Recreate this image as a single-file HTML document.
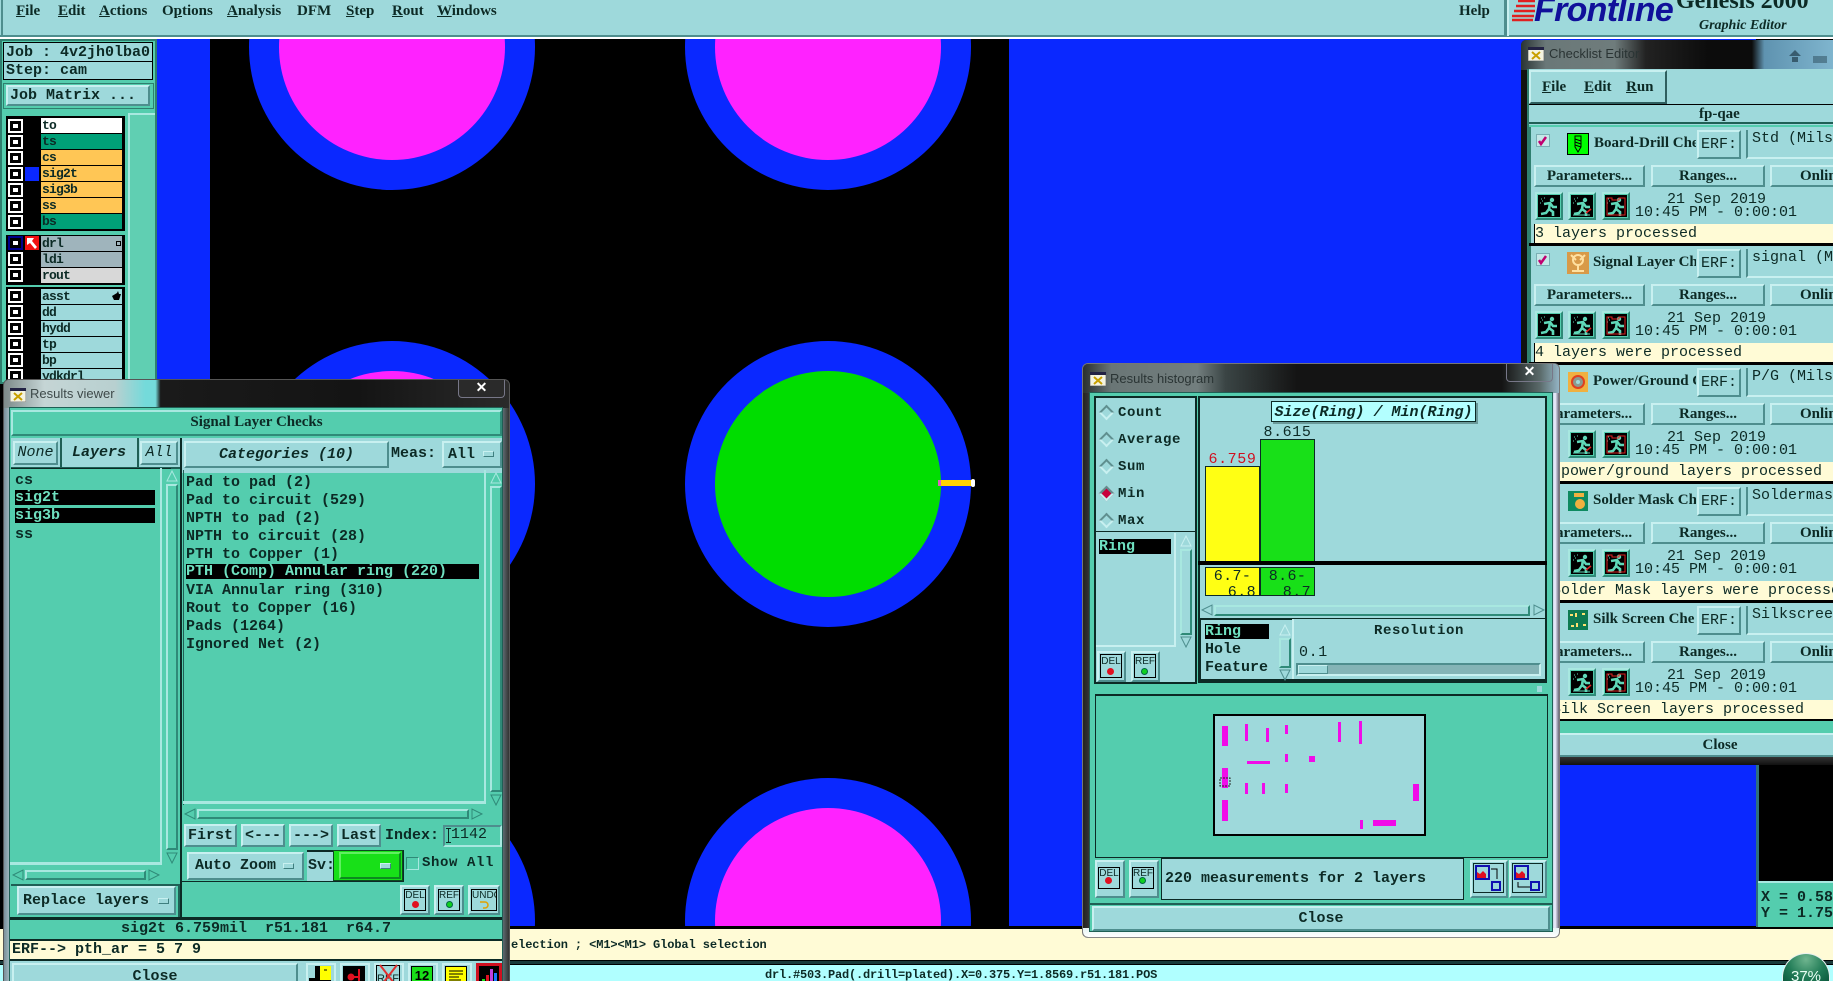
<!DOCTYPE html>
<html><head><meta charset="utf-8"><title>Genesis 2000</title>
<style>
html,body{margin:0;padding:0;width:1833px;height:981px;overflow:hidden;background:#000}
#root{position:relative;width:1833px;height:981px;overflow:hidden;font-family:"Liberation Mono",monospace;color:#0c2a25}
.a{position:absolute;white-space:pre;box-sizing:border-box}
.b{position:absolute;white-space:pre;box-sizing:border-box;background:#9ed9db;border:2px solid;border-color:#c8f0f0 #4e8e8e #4e8e8e #c8f0f0;text-align:center;overflow:hidden}
.s{position:absolute;box-sizing:border-box;background:#54cdae;border:2px solid;border-color:#a8e8e0 #2f8a78 #2f8a78 #a8e8e0}
.m{font:bold 15px/18px "Liberation Mono",monospace}
.r{font:15px/18px "Liberation Mono",monospace}
.f{font:bold 15px/18px "Liberation Serif",serif}
.u{text-decoration:underline}
.n{font:bold 13px/16px "Liberation Mono",monospace;letter-spacing:-.8px;padding-left:1px}
.k{position:absolute;width:15px;height:14px;background:#fff;box-sizing:border-box}
.k i{position:absolute;left:2px;top:2px;width:11px;height:10px;border:3px solid #000;background:#fff;box-sizing:border-box}
.d{position:absolute;width:11px;height:11px;transform:rotate(45deg);box-sizing:border-box;border:2px solid;border-color:#5f8f8f #c8f0f0 #c8f0f0 #5f8f8f;background:#9ed9db}
.ind{position:absolute;width:11px;height:6px;box-sizing:border-box;background:#9ed9db;border:1px solid;border-color:#c8f0f0 #3f7f7f #3f7f7f #c8f0f0;z-index:2}
svg{position:absolute;display:block}
</style></head><body><div id="root">
<svg width="0" height="0" style="position:absolute"><defs>
<symbol id="run" viewBox="0 0 22 22"><rect width="22" height="22" fill="#000"/><circle cx="14" cy="5" r="2.2" fill="#5fd8b8"/><path d="M6 9l6-1 3 4 4 0M12 8l-1 6 4 3 0 4M11 14l-3 4-5 1" fill="none" stroke="#5fd8b8" stroke-width="2.6"/><path d="M3 4h1M6 3h1M4 6h1M2 8h1" stroke="#5fd8b8"/></symbol>
<symbol id="run2" viewBox="0 0 22 22"><use href="#run" width="22" height="22"/><path d="M2 20h17" stroke="#5fd8b8"/><path d="M15 18l5-4" stroke="#e02020" stroke-width="1.5"/></symbol>
<symbol id="run3" viewBox="0 0 22 22"><use href="#run" width="22" height="22"/><path d="M2 3h5v2h7v-2h6v17h-18z" fill="none" stroke="#e02020"/></symbol>
</defs></svg>

<!-- canvas -->
<div class="a" style="left:0;top:39px;width:1833px;height:890px;background:#000"></div>
<div class="a" style="left:157px;top:39px;width:53px;height:888px;background:#0a28ff"></div>
<div class="a" style="left:1009px;top:39px;width:747px;height:888px;background:#0a28ff"></div>
<svg style="left:210px;top:39px" width="800" height="888" viewBox="210 39 800 888">
<g fill="#0a28ff"><circle cx="392" cy="47" r="143"/><circle cx="828" cy="47" r="143"/><circle cx="392" cy="484" r="143"/><circle cx="828" cy="484" r="143"/><circle cx="392" cy="921" r="143"/><circle cx="828" cy="921" r="143"/></g>
<g fill="#ff22ff"><circle cx="392" cy="47" r="113"/><circle cx="828" cy="47" r="113"/><circle cx="392" cy="484" r="113"/><circle cx="392" cy="921" r="113"/><circle cx="828" cy="921" r="113"/></g>
<circle cx="828" cy="484" r="113" fill="#00dd00"/>
<rect x="938" y="480" width="4" height="6" fill="#e060c0"/><rect x="941" y="480" width="31" height="6" fill="#ffd400"/><rect x="971" y="479" width="4" height="8" rx="2" fill="#fff"/>
</svg>

<!-- menu bar -->
<div class="a" style="left:0;top:0;width:1833px;height:39px;background:#9ed9db;border-bottom:3px solid #fff"></div>
<div class="a" style="left:0;top:35px;width:1833px;height:2px;background:#4e8e8e"></div>
<div class="a" style="left:1px;top:0;width:2px;height:36px;background:#4e8e8e"></div>
<div class="a f" style="left:16px;top:2px"><span class="u">F</span>ile</div>
<div class="a f" style="left:58px;top:2px"><span class="u">E</span>dit</div>
<div class="a f" style="left:99px;top:2px"><span class="u">A</span>ctions</div>
<div class="a f" style="left:162px;top:2px">O<span class="u">p</span>tions</div>
<div class="a f" style="left:227px;top:2px"><span class="u">A</span>nalysis</div>
<div class="a f" style="left:297px;top:2px">DFM</div>
<div class="a f" style="left:346px;top:2px"><span class="u">S</span>tep</div>
<div class="a f" style="left:392px;top:2px"><span class="u">R</span>out</div>
<div class="a f" style="left:437px;top:2px"><span class="u">W</span>indows</div>
<div class="a f" style="left:1459px;top:2px">Help</div>
<div class="a" style="left:1504px;top:0;width:3px;height:36px;background:#4e8e8e"></div>
<div class="a" style="left:1507px;top:0;width:2px;height:36px;background:#c8f0f0"></div>
<div class="a" style="left:1510px;top:0;width:323px;height:36px;overflow:hidden">
<svg style="left:2px;top:0" width="24" height="24" viewBox="0 0 24 24"><path d="M6 1h17M4 6h19M2 11h21M0 16h22M0 20h21" stroke="#e02020" stroke-width="2.4"/></svg>
<div class="a" style="left:24px;top:-10px;font:italic bold 34px/40px 'Liberation Sans',sans-serif;color:#10109a;letter-spacing:-.7px">Frontline</div>
<div class="a" style="left:166px;top:-13px;font:bold 24px/28px 'Liberation Serif',serif;color:#0c2a25">Genesis 2000</div>
<div class="a" style="left:189px;top:17px;font:italic bold 14px/17px 'Liberation Serif',serif;color:#0c2a25">Graphic Editor</div>
</div>

<!-- left panel -->
<div class="a" style="left:0;top:39px;width:157px;height:345px;background:#54cdae;border:2px solid #2f7f6f"></div>
<div class="a m" style="left:3px;top:42px;width:150px;height:20px;background:#9ed9db;border:1px solid #000;padding-left:2px;line-height:19px">Job : 4v2jh0lba0</div>
<div class="a m" style="left:3px;top:61px;width:150px;height:19px;background:#9ed9db;border:1px solid #000;padding-left:2px;line-height:18px">Step: cam</div>
<div class="a" style="left:3px;top:83px;width:151px;height:26px;background:#54cdae;border:1px solid #2f7f6f"></div>
<div class="b m" style="left:6px;top:85px;width:144px;height:21px;text-align:left;padding-left:2px;line-height:17px">Job Matrix ...</div>
<div class="a" style="left:128px;top:113px;width:27px;height:270px;background:#60cfb2;border-left:2px solid #a8e8e0;border-top:2px solid #a8e8e0"></div>
<div class="a" style="left:6px;top:116px;width:119px;height:115px;background:#000"></div>
<div class="a" style="left:6px;top:235px;width:119px;height:50px;background:#000"></div>
<div class="a" style="left:6px;top:287px;width:119px;height:96px;background:#000"></div>

<div class="k" style="left:8px;top:119px"><i></i></div><div class="a n" style="left:41px;top:118px;width:81px;height:15px;background:#fff">to</div>
<div class="k" style="left:8px;top:135px"><i></i></div><div class="a n" style="left:41px;top:134px;width:81px;height:15px;background:#00a078">ts</div>
<div class="k" style="left:8px;top:151px"><i></i></div><div class="a n" style="left:41px;top:150px;width:81px;height:15px;background:#ffc655">cs</div>
<div class="k" style="left:8px;top:167px"><i></i></div><div class="a" style="left:25px;top:167px;width:14px;height:14px;background:#0a28ff"></div><div class="a n" style="left:41px;top:166px;width:81px;height:15px;background:#ffc655">sig2t</div>
<div class="k" style="left:8px;top:183px"><i></i></div><div class="a n" style="left:41px;top:182px;width:81px;height:15px;background:#ffc655">sig3b</div>
<div class="k" style="left:8px;top:199px"><i></i></div><div class="a n" style="left:41px;top:198px;width:81px;height:15px;background:#ffc655">ss</div>
<div class="k" style="left:8px;top:215px"><i></i></div><div class="a n" style="left:41px;top:214px;width:81px;height:15px;background:#00a078">bs</div>

<div class="k" style="left:8px;top:236px;background:#00008b"><i></i></div><svg style="left:25px;top:236px" width="14" height="14" viewBox="0 0 14 14"><rect width="14" height="14" fill="#f01010"/><path d="M2 2h7L7 5l5 6-2 2-5-6-3 2z" fill="#fff"/></svg><div class="a n" style="left:41px;top:236px;width:81px;height:15px;background:#9fb4bc">drl</div><div class="a" style="left:116px;top:241px;width:5px;height:5px;border:1px solid #000"></div>
<div class="k" style="left:8px;top:252px"><i></i></div><div class="a n" style="left:41px;top:252px;width:81px;height:15px;background:#9fb4bc">ldi</div>
<div class="k" style="left:8px;top:268px"><i></i></div><div class="a n" style="left:41px;top:268px;width:81px;height:15px;background:#d8d8d8">rout</div>

<div class="k" style="left:8px;top:289px"><i></i></div><div class="a n" style="left:41px;top:289px;width:81px;height:15px;background:#9ed9db">asst</div><svg style="left:112px;top:291px" width="9" height="10" viewBox="0 0 9 10"><path d="M0 5l5-3 1-2 1 3 2 0-2 6H2z" fill="#000"/></svg>
<div class="k" style="left:8px;top:305px"><i></i></div><div class="a n" style="left:41px;top:305px;width:81px;height:15px;background:#9ed9db">dd</div>
<div class="k" style="left:8px;top:321px"><i></i></div><div class="a n" style="left:41px;top:321px;width:81px;height:15px;background:#9ed9db">hydd</div>
<div class="k" style="left:8px;top:337px"><i></i></div><div class="a n" style="left:41px;top:337px;width:81px;height:15px;background:#9ed9db">tp</div>
<div class="k" style="left:8px;top:353px"><i></i></div><div class="a n" style="left:41px;top:353px;width:81px;height:15px;background:#9ed9db">bp</div>
<div class="k" style="left:8px;top:369px"><i></i></div><div class="a n" style="left:41px;top:369px;width:81px;height:15px;background:#9ed9db">ydkdrl</div>

<!-- bottom bars -->
<div class="a" style="left:0;top:926px;width:1833px;height:3px;background:#000"></div>
<div class="a" style="left:0;top:929px;width:1833px;height:31px;background:#fffbd6"></div>
<div class="a" style="left:511px;top:936px;font:bold 12px/18px 'Liberation Mono',monospace;letter-spacing:-.1px">election ; &lt;M1&gt;&lt;M1&gt; Global selection</div>
<div class="a" style="left:0;top:960px;width:1833px;height:5px;background:#1a3a3a;border-bottom:1px solid #000;border-top:1px solid #000"></div>
<div class="a" style="left:0;top:965px;width:1833px;height:16px;background:#b0ffff;overflow:hidden">
 <div class="a" style="left:765px;top:1px;height:15px;font:bold 12px/18px 'Liberation Mono',monospace;letter-spacing:-.2px;overflow:hidden">drl.#503.Pad(.drill=plated).X=0.375.Y=1.8569.r51.181.POS</div>
</div>
<div class="a" style="left:1782px;top:953px;width:48px;height:28px;overflow:hidden">
 <div class="a" style="left:0;top:0;width:48px;height:28px;border-radius:24px 24px 0 0;background:radial-gradient(circle at 50% 20%,#6fb58f,#1f7a55 60%,#0d5a3e);border:1px solid #e8f0f0;border-bottom:0;color:#e8fff4;font:15px/46px 'Liberation Sans',sans-serif;text-align:center;overflow:hidden">37%</div>
</div>

<!-- right corner -->
<div class="a" style="left:1756px;top:765px;width:3px;height:162px;background:#2f6f7f"></div>
<div class="a" style="left:1758px;top:881px;width:75px;height:46px;background:#54cdae;border-top:2px solid #a8e8e0"></div>
<div class="a" style="left:1761px;top:890px;width:72px;overflow:hidden;font:bold 15px/16px 'Liberation Mono',monospace;white-space:pre">X = 0.58
Y = 1.75</div>

<!-- checklist window -->
<div class="a" style="left:1521px;top:40px;width:312px;height:725px;background:#111;border-radius:5px 0 0 0;z-index:5;overflow:hidden">
 <div class="a" style="left:0;top:0;width:312px;height:30px;background:linear-gradient(90deg,#2a3434 0,#6a7878 8%,#6f7c7c 30%,#222 40%,#0c0c0c 60%,#0c0c0c 74%,#5f93b0 78%,#7fb5ce 100%)"></div>
 <svg style="left:7px;top:7px" width="16" height="14" viewBox="0 0 16 14"><rect width="16" height="14" fill="#f4f4e0" stroke="#888"/><rect width="16" height="3" fill="#224"/><path d="M4 5l8 7M12 5l-8 7" stroke="#c8a000" stroke-width="2"/></svg>
 <div class="a" style="left:28px;top:5px;font:13px/17px 'Liberation Sans',sans-serif;color:#2a3434">Checklist Editor</div>
 <svg style="left:265px;top:5px" width="47" height="22" viewBox="0 0 47 22"><path d="M3 11l6-6 6 6zM6 12h6v5H6z" fill="#2a4a5a" opacity=".8"/><rect x="27" y="11" width="14" height="7" fill="#2a4a5a" opacity=".5"/></svg>
 <div class="a" style="left:6px;top:29px;width:306px;height:696px;background:#9ed9db"></div>
 <div class="a" style="left:6px;top:29px;width:2px;height:696px;background:#2f7f6f"></div>
</div>
<div class="a" style="left:1527px;top:69px;width:306px;height:696px;z-index:5;overflow:hidden">
 <div class="b" style="left:2px;top:1px;width:138px;height:34px;border-right-color:#2f5f5f;border-bottom-color:#2f5f5f"></div>
 <div class="a f" style="left:15px;top:9px"><span class="u">F</span>ile</div>
 <div class="a f" style="left:57px;top:9px"><span class="u">E</span>dit</div>
 <div class="a f" style="left:99px;top:9px"><span class="u">R</span>un</div>
 <div class="a" style="left:2px;top:35px;width:304px;height:1px;background:#000"></div>
 <div class="a" style="left:2px;top:36px;width:304px;height:19px;background:#9ed9db;border-bottom:2px solid #1f5f55"></div>
 <div class="a f" style="left:172px;top:36px;font-size:15px">fp-qae</div>
 <div class="a" style="left:2px;top:56px;width:304px;height:609px;background:#54cdae"></div>
</div>
<div class="a" style="left:1527px;top:125px;width:306px;height:640px;z-index:5;overflow:hidden">
 <!-- ITEM 1 -->
 <div class="a" style="left:2px;top:2px;width:304px;height:116px;background:#9ed9db;border-left:2px solid #2f7f6f"></div>
 <svg style="left:9px;top:9px" width="14" height="13" viewBox="0 0 14 13"><rect x=".5" y=".5" width="13" height="12" fill="#c4e8e8" stroke="#7ab0b4"/><path d="M3 7l2 3 5-7" fill="none" stroke="#c00070" stroke-width="2.5"/></svg>
 <svg style="left:40px;top:8px" width="22" height="22" viewBox="0 0 22 22"><rect x=".5" y=".5" width="21" height="21" fill="#0f0" stroke="#000"/><path d="M8 3h6v11l-3 5-3-5zM8 6l6 2M8 9l6 2M8 12l6 2" fill="none" stroke="#000"/></svg>
 <div class="a f" style="left:67px;top:9px;width:102px;overflow:hidden">Board-Drill Che</div>
 <div class="b r" style="left:170px;top:5px;width:44px;height:29px;line-height:26px">ERF:</div>
 <div class="a r" style="left:219px;top:5px;width:87px;height:29px;border-left:2px solid #4e8e8e;border-bottom:2px solid #c8f0f0;padding-left:4px;line-height:18px;overflow:hidden">Std (Mils</div>
 <div class="b f" style="left:7px;top:40px;width:111px;height:22px">Parameters...</div>
 <div class="b f" style="left:124px;top:40px;width:114px;height:22px">Ranges...</div>
 <div class="b f" style="left:243px;top:40px;width:63px;height:22px;text-align:left;padding-left:28px;border-right:0">Online</div>
 <div class="s" style="left:8px;top:67px;width:28px;height:28px"></div><svg style="left:11px;top:70px" width="22" height="22"><use href="#run"/></svg>
 <div class="s" style="left:41px;top:67px;width:28px;height:28px"></div><svg style="left:44px;top:70px" width="22" height="22"><use href="#run2"/></svg>
 <div class="s" style="left:75px;top:67px;width:28px;height:28px"></div><svg style="left:78px;top:70px" width="22" height="22"><use href="#run3"/></svg>
 <div class="a r" style="left:140px;top:66px">21 Sep 2019</div>
 <div class="a r" style="left:108px;top:79px">10:45 PM - 0:00:01</div>
 <div class="a r" style="left:7px;top:99px;width:299px;height:20px;background:#fffbd6;line-height:19px;border-left:1px solid #000">3 layers processed</div>
 <div class="a" style="left:2px;top:118px;width:304px;height:3px;background:#000"></div>
 <!-- ITEM 2 -->
 <div class="a" style="left:2px;top:121px;width:304px;height:116px;background:#9ed9db;border-left:2px solid #2f7f6f"></div>
 <svg style="left:9px;top:128px" width="14" height="13" viewBox="0 0 14 13"><rect x=".5" y=".5" width="13" height="12" fill="#c4e8e8" stroke="#7ab0b4"/><path d="M3 7l2 3 5-7" fill="none" stroke="#c00070" stroke-width="2.5"/></svg>
 <svg style="left:40px;top:127px" width="22" height="22" viewBox="0 0 22 22"><rect width="22" height="22" fill="#d89a48"/><circle cx="11" cy="8" r="5" fill="none" stroke="#ffe0a0" stroke-width="2"/><path d="M4 3l5 5M18 3l-5 5M11 13v5M5 19h12" stroke="#ffe0a0" stroke-width="2"/></svg>
 <div class="a f" style="left:66px;top:128px;width:103px;overflow:hidden">Signal Layer Ch</div>
 <div class="b r" style="left:170px;top:124px;width:44px;height:29px;line-height:26px">ERF:</div>
 <div class="a r" style="left:219px;top:124px;width:87px;height:29px;border-left:2px solid #4e8e8e;border-bottom:2px solid #c8f0f0;padding-left:4px;overflow:hidden">signal (M</div>
 <div class="b f" style="left:7px;top:159px;width:111px;height:22px">Parameters...</div>
 <div class="b f" style="left:124px;top:159px;width:114px;height:22px">Ranges...</div>
 <div class="b f" style="left:243px;top:159px;width:63px;height:22px;text-align:left;padding-left:28px;border-right:0">Online</div>
 <div class="s" style="left:8px;top:186px;width:28px;height:28px"></div><svg style="left:11px;top:189px" width="22" height="22"><use href="#run"/></svg>
 <div class="s" style="left:41px;top:186px;width:28px;height:28px"></div><svg style="left:44px;top:189px" width="22" height="22"><use href="#run2"/></svg>
 <div class="s" style="left:75px;top:186px;width:28px;height:28px"></div><svg style="left:78px;top:189px" width="22" height="22"><use href="#run3"/></svg>
 <div class="a r" style="left:140px;top:185px">21 Sep 2019</div>
 <div class="a r" style="left:108px;top:198px">10:45 PM - 0:00:01</div>
 <div class="a r" style="left:7px;top:218px;width:299px;height:20px;background:#fffbd6;line-height:19px;border-left:1px solid #000">4 layers were processed</div>
 <div class="a" style="left:2px;top:237px;width:304px;height:3px;background:#000"></div>
 <!-- ITEM 3 -->
 <div class="a" style="left:2px;top:240px;width:304px;height:116px;background:#9ed9db"></div>
 <svg style="left:41px;top:247px" width="20" height="20" viewBox="0 0 20 20"><rect width="20" height="20" fill="#f0b040"/><circle cx="10" cy="10" r="6" fill="#8a9a90" stroke="#e04020" stroke-width="2"/><circle cx="10" cy="10" r="2" fill="#9ed9db"/></svg>
 <div class="a f" style="left:66px;top:247px;width:103px;overflow:hidden">Power/Ground C</div>
 <div class="b r" style="left:170px;top:243px;width:44px;height:29px;line-height:26px">ERF:</div>
 <div class="a r" style="left:219px;top:243px;width:87px;height:29px;border-left:2px solid #4e8e8e;border-bottom:2px solid #c8f0f0;padding-left:4px;overflow:hidden">P/G (Mils</div>
 <div class="b f" style="left:7px;top:278px;width:111px;height:22px">Parameters...</div>
 <div class="b f" style="left:124px;top:278px;width:114px;height:22px">Ranges...</div>
 <div class="b f" style="left:243px;top:278px;width:63px;height:22px;text-align:left;padding-left:28px;border-right:0">Online</div>
 <div class="s" style="left:41px;top:305px;width:28px;height:28px"></div><svg style="left:44px;top:308px" width="22" height="22"><use href="#run2"/></svg>
 <div class="s" style="left:75px;top:305px;width:28px;height:28px"></div><svg style="left:78px;top:308px" width="22" height="22"><use href="#run3"/></svg>
 <div class="a r" style="left:140px;top:304px">21 Sep 2019</div>
 <div class="a r" style="left:108px;top:317px">10:45 PM - 0:00:01</div>
 <div class="a r" style="left:7px;top:337px;width:299px;height:20px;background:#fffbd6;line-height:19px">12 power/ground layers processed</div>
 <div class="a" style="left:2px;top:356px;width:304px;height:3px;background:#000"></div>
 <!-- ITEM 4 -->
 <div class="a" style="left:2px;top:359px;width:304px;height:116px;background:#9ed9db"></div>
 <svg style="left:41px;top:366px" width="20" height="20" viewBox="0 0 20 20"><rect width="20" height="20" fill="#0e8a60"/><circle cx="12" cy="13" r="5" fill="#f0b040"/><path d="M6 2h10v4H6z" fill="#f0b040"/></svg>
 <div class="a f" style="left:66px;top:366px;width:103px;overflow:hidden">Solder Mask Ch</div>
 <div class="b r" style="left:170px;top:362px;width:44px;height:29px;line-height:26px">ERF:</div>
 <div class="a r" style="left:219px;top:362px;width:87px;height:29px;border-left:2px solid #4e8e8e;border-bottom:2px solid #c8f0f0;padding-left:4px;overflow:hidden">Soldermas</div>
 <div class="b f" style="left:7px;top:397px;width:111px;height:22px">Parameters...</div>
 <div class="b f" style="left:124px;top:397px;width:114px;height:22px">Ranges...</div>
 <div class="b f" style="left:243px;top:397px;width:63px;height:22px;text-align:left;padding-left:28px;border-right:0">Online</div>
 <div class="s" style="left:41px;top:424px;width:28px;height:28px"></div><svg style="left:44px;top:427px" width="22" height="22"><use href="#run2"/></svg>
 <div class="s" style="left:75px;top:424px;width:28px;height:28px"></div><svg style="left:78px;top:427px" width="22" height="22"><use href="#run3"/></svg>
 <div class="a r" style="left:140px;top:423px">21 Sep 2019</div>
 <div class="a r" style="left:108px;top:436px">10:45 PM - 0:00:01</div>
 <div class="a r" style="left:7px;top:456px;width:299px;height:20px;background:#fffbd6;line-height:19px;overflow:hidden">2 Solder Mask layers were processed</div>
 <div class="a" style="left:2px;top:475px;width:304px;height:3px;background:#000"></div>
 <!-- ITEM 5 -->
 <div class="a" style="left:2px;top:478px;width:304px;height:116px;background:#9ed9db"></div>
 <svg style="left:41px;top:485px" width="20" height="20" viewBox="0 0 20 20"><rect width="20" height="20" fill="#0e7a50"/><path d="M2 5h3M8 3v4M14 4h3M3 16h3M9 13v4M15 15h3" stroke="#ffe070" stroke-width="2"/></svg>
 <div class="a f" style="left:66px;top:485px;width:103px;overflow:hidden">Silk Screen Che</div>
 <div class="b r" style="left:170px;top:481px;width:44px;height:29px;line-height:26px">ERF:</div>
 <div class="a r" style="left:219px;top:481px;width:87px;height:29px;border-left:2px solid #4e8e8e;border-bottom:2px solid #c8f0f0;padding-left:4px;overflow:hidden">Silkscree</div>
 <div class="b f" style="left:7px;top:516px;width:111px;height:22px">Parameters...</div>
 <div class="b f" style="left:124px;top:516px;width:114px;height:22px">Ranges...</div>
 <div class="b f" style="left:243px;top:516px;width:63px;height:22px;text-align:left;padding-left:28px;border-right:0">Online</div>
 <div class="s" style="left:41px;top:543px;width:28px;height:28px"></div><svg style="left:44px;top:546px" width="22" height="22"><use href="#run2"/></svg>
 <div class="s" style="left:75px;top:543px;width:28px;height:28px"></div><svg style="left:78px;top:546px" width="22" height="22"><use href="#run3"/></svg>
 <div class="a r" style="left:140px;top:542px">21 Sep 2019</div>
 <div class="a r" style="left:108px;top:555px">10:45 PM - 0:00:01</div>
 <div class="a r" style="left:7px;top:575px;width:299px;height:20px;background:#fffbd6;line-height:19px">2 Silk Screen layers processed</div>
 <div class="a" style="left:2px;top:594px;width:304px;height:2px;background:#000"></div>
 <div class="a" style="left:2px;top:596px;width:304px;height:12px;background:#54cdae"></div>
 <div class="b f" style="left:2px;top:608px;width:304px;height:24px;line-height:20px;padding-left:76px;border-right:0">Close</div>
 <div class="a" style="left:0;top:632px;width:306px;height:8px;background:linear-gradient(#333,#111)"></div>
</div>

<!-- results viewer window -->
<div class="a" style="left:3px;top:379px;width:507px;height:602px;background:linear-gradient(90deg,#7a8f9a,#c0dde0 2%,#7a8f9a 98%,#333);border-radius:6px 6px 0 0;border:1px solid #555;border-bottom:0;z-index:6;overflow:hidden">
 <div class="a" style="left:0;top:0;width:505px;height:28px;background:linear-gradient(90deg,#7d8a8a 0,#c5d5d5 8%,#b8d0d0 22%,#74dada 28%,#74dada 30%,#1a1a1a 31%,#141414 70%,#2a2a2a 100%)"></div>
 <svg style="left:6px;top:8px" width="16" height="14" viewBox="0 0 16 14"><rect width="16" height="14" fill="#f4f4e0" stroke="#888"/><rect width="16" height="3" fill="#224"/><path d="M4 5l8 7M12 5l-8 7" stroke="#c8a000" stroke-width="2"/></svg>
 <div class="a" style="left:26px;top:5px;font:13px/17px 'Liberation Sans',sans-serif;color:#3e4a4a">Results viewer</div>
 <div class="a" style="left:454px;top:0;width:47px;height:18px;border:1px solid #778;border-top:0;border-radius:0 0 4px 4px;background:#2a2a2a;color:#fff;font:bold 14px/15px 'Liberation Sans',sans-serif;text-align:center">✕</div>
</div>
<div class="a" style="left:9px;top:407px;width:494px;height:574px;background:#54cdae;border:1px solid #1f5f55;border-bottom:0;z-index:6;overflow:hidden">
 <div class="a f" style="left:1px;top:2px;width:491px;height:26px;text-align:center;border:2px solid;border-color:#a8e8e0 #2f8a78 #2f8a78 #a8e8e0;line-height:21px">Signal Layer Checks</div>
 <div class="a" style="left:1px;top:30px;width:169px;height:31px;background:#9ed9db;border-bottom:2px solid #1f5f55"></div>
 <div class="b" style="left:3px;top:33px;width:45px;height:24px;font:italic 15px/20px 'Liberation Mono',monospace">None</div>
 <div class="a m" style="left:62px;top:35px;font-style:italic;line-height:20px">Layers</div>
 <div class="a" style="left:50px;top:30px;width:2px;height:30px;background:#1f5f55"></div>
 <div class="a" style="left:127px;top:30px;width:2px;height:30px;background:#1f5f55"></div>
 <div class="b" style="left:130px;top:33px;width:38px;height:24px;font:italic 15px/20px 'Liberation Mono',monospace">All</div>
 <div class="a" style="left:170px;top:30px;width:2px;height:481px;background:#0c2a25"></div>
 <div class="a" style="left:172px;top:30px;width:320px;height:35px;background:#9ed9db"></div>
 <div class="b m" style="left:174px;top:33px;width:205px;height:27px;font-style:italic;line-height:23px">Categories (10)</div>
 <div class="a m" style="left:381px;top:36px;line-height:20px">Meas:</div>
 <div class="b m" style="left:432px;top:33px;width:60px;height:27px;text-align:left;padding-left:4px;line-height:23px">All</div>
 <div class="ind" style="left:473px;top:43px"></div>

 <!-- left list -->
 <div class="a" style="left:1px;top:60px;width:160px;height:1px;background:#0c2a25"></div>
 <div class="a m" style="left:5px;top:64px">cs</div>
 <div class="a m" style="left:5px;top:82px;width:140px;height:15px;background:#000;color:#6fe0c0;line-height:15px">sig2t</div>
 <div class="a m" style="left:5px;top:100px;width:140px;height:15px;background:#000;color:#6fe0c0;line-height:15px">sig3b</div>
 <div class="a m" style="left:5px;top:118px">ss</div>
 <div class="a" style="left:150px;top:60px;width:2px;height:395px;background:#a8e8e0"></div>
 <div class="a" style="left:0;top:454px;width:152px;height:3px;background:#a8e8e0"></div>
 <svg style="left:156px;top:62px" width="12" height="12"><path d="M6 1L11 11H1z" fill="#54cdae" stroke="#a8e8e0"/></svg>
 <div class="s" style="left:156px;top:76px;width:12px;height:366px"></div>
 <svg style="left:156px;top:444px" width="12" height="12"><path d="M6 11L11 1H1z" fill="#54cdae" stroke="#2f8a78"/></svg>
 <svg style="left:2px;top:461px" width="12" height="12"><path d="M1 6L11 1V11z" fill="#54cdae" stroke="#2f8a78"/></svg>
 <div class="s" style="left:15px;top:462px;width:121px;height:10px"></div>
 <svg style="left:138px;top:461px" width="12" height="12"><path d="M11 6L1 1V11z" fill="#54cdae" stroke="#2f8a78"/></svg>
 <div class="a" style="left:1px;top:476px;width:169px;height:35px;border:2px solid #1f5f55;border-left:0"></div>
 <div class="b m" style="left:7px;top:478px;width:159px;height:29px;text-align:left;padding-left:4px;line-height:25px">Replace layers</div>
 <div class="ind" style="left:148px;top:490px"></div>

 <!-- right list -->
 <div class="a" style="left:173px;top:62px;width:1px;height:335px;background:#1f5f55"></div>
 <div class="a m" style="left:176px;top:66px">Pad to pad (2)</div>
 <div class="a m" style="left:176px;top:84px">Pad to circuit (529)</div>
 <div class="a m" style="left:176px;top:102px">NPTH to pad (2)</div>
 <div class="a m" style="left:176px;top:120px">NPTH to circuit (28)</div>
 <div class="a m" style="left:176px;top:138px">PTH to Copper (1)</div>
 <div class="a m" style="left:176px;top:156px;width:293px;height:15px;background:#000;color:#6fe0c0;line-height:15px">PTH (Comp) Annular ring (220)</div>
 <div class="a m" style="left:176px;top:174px">VIA Annular ring (310)</div>
 <div class="a m" style="left:176px;top:192px">Rout to Copper (16)</div>
 <div class="a m" style="left:176px;top:210px">Pads (1264)</div>
 <div class="a m" style="left:176px;top:228px">Ignored Net (2)</div>
 <div class="a" style="left:474px;top:62px;width:2px;height:332px;background:#a8e8e0"></div>
 <div class="a" style="left:173px;top:393px;width:303px;height:3px;background:#a8e8e0"></div>
 <svg style="left:480px;top:64px" width="12" height="12"><path d="M6 1L11 11H1z" fill="#54cdae" stroke="#a8e8e0"/></svg>
 <div class="s" style="left:480px;top:78px;width:12px;height:306px"></div>
 <svg style="left:480px;top:386px" width="12" height="12"><path d="M6 11L11 1H1z" fill="#54cdae" stroke="#2f8a78"/></svg>
 <svg style="left:174px;top:400px" width="12" height="12"><path d="M1 6L11 1V11z" fill="#54cdae" stroke="#2f8a78"/></svg>
 <div class="s" style="left:187px;top:401px;width:272px;height:10px"></div>
 <svg style="left:461px;top:400px" width="12" height="12"><path d="M11 6L1 1V11z" fill="#54cdae" stroke="#2f8a78"/></svg>

 <div class="b m" style="left:174px;top:416px;width:53px;height:23px;line-height:19px">First</div>
 <div class="b m" style="left:231px;top:416px;width:44px;height:23px;line-height:19px">&lt;---</div>
 <div class="b m" style="left:279px;top:416px;width:44px;height:23px;line-height:19px">---&gt;</div>
 <div class="b m" style="left:327px;top:416px;width:44px;height:23px;line-height:19px">Last</div>
 <div class="a m" style="left:375px;top:419px">Index:</div>
 <div class="a r" style="left:433px;top:417px;width:59px;height:22px;border:2px solid;border-color:#4e8e8e #a8e8e0 #a8e8e0 #4e8e8e;padding-left:6px;line-height:16px">1142</div>
 <svg style="left:436px;top:420px" width="5" height="15"><path d="M0 .5h5M0 14.5h5M2.5 0v15" stroke="#0c2a25"/></svg>
 <div class="a" style="left:171px;top:442px;width:223px;height:32px;background:#0c2a25"></div>
 <div class="a" style="left:172px;top:442px;width:125px;height:31px;background:#54cdae"></div>
 <div class="b m" style="left:177px;top:444px;width:117px;height:28px;text-align:left;padding-left:6px;line-height:24px">Auto Zoom</div>
 <div class="ind" style="left:273px;top:455px"></div>
 <div class="a m" style="left:297px;top:444px;width:28px;height:29px;background:#9ed9db;line-height:28px;padding-left:1px">Sv:</div>
 <div class="a" style="left:323px;top:442px;width:70px;height:31px;background:#18e018;border:1px solid #0c4a20"></div>
 <div class="a" style="left:329px;top:444px;width:62px;height:27px;background:#18e018;border:2px solid;border-color:#60f060 #0c8a20 #0c8a20 #60f060"></div>
 <div class="ind" style="left:370px;top:455px"></div>
 <div class="a" style="left:396px;top:449px;width:13px;height:13px;border:1px solid #2f8a78;border-right-color:#a8e8e0;border-bottom-color:#a8e8e0"></div>
 <div class="a m" style="left:412px;top:446px;font-size:14px;letter-spacing:.6px">Show All</div>

 <div class="b" style="left:390px;top:477px;width:30px;height:30px"></div><div class="a" style="left:394px;top:481px;width:22px;height:22px;border:1px solid #000;font:10px/11px 'Liberation Sans',sans-serif;text-align:center">DEL</div><div class="a" style="left:402px;top:493px;width:7px;height:7px;border-radius:50%;background:#e01020"></div>
 <div class="b" style="left:424px;top:477px;width:30px;height:30px"></div><div class="a" style="left:428px;top:481px;width:22px;height:22px;border:1px solid #000;font:10px/11px 'Liberation Sans',sans-serif;text-align:center">REF</div><div class="a" style="left:436px;top:493px;width:7px;height:7px;border-radius:50%;background:#10d020;border:1px solid #064"></div>
 <div class="b" style="left:458px;top:477px;width:32px;height:30px"></div><div class="a" style="left:461px;top:481px;width:26px;height:22px;border:1px solid #000;font:10px/11px 'Liberation Sans',sans-serif;text-align:center;overflow:hidden">UNDO</div><svg style="left:468px;top:491px" width="12" height="11"><path d="M2 3h5a3 3 0 0 1 0 6H5" fill="none" stroke="#e0a000" stroke-width="1.5"/></svg>

 <div class="a" style="left:0;top:509px;width:492px;height:3px;background:#0c2a25"></div>
 <div class="a m" style="left:0;top:511px;width:492px;height:20px;text-align:center;line-height:20px">sig2t 6.759mil  r51.181  r64.7</div>
 <div class="a m" style="left:0;top:531px;width:492px;height:22px;background:#fffbd6;border-top:2px solid #0c2a25;border-bottom:2px solid #0c2a25;padding-left:2px;line-height:18px">ERF--&gt; pth_ar = 5 7 9</div>
 <div class="a" style="left:0;top:553px;width:492px;height:21px;background:#9ed9db"></div>
 <div class="b m" style="left:2px;top:555px;width:286px;height:19px;line-height:24px;border-bottom:0">Close</div>

 <div class="a" style="left:296px;top:555px;width:30px;height:19px;border:2px solid #c8f0f0;border-bottom:0"></div>
 <svg style="left:298px;top:557px" width="24" height="17" viewBox="0 0 24 17"><rect x="1" y="1" width="22" height="16" fill="#000"/><rect x="12" y="1" width="11" height="14" fill="#ff0"/><rect x="1" y="1" width="6" height="12" fill="#9ed9db"/><path d="M16 5h3" stroke="#000"/></svg>
 <div class="a" style="left:330px;top:555px;width:30px;height:19px;border:2px solid #c8f0f0;border-bottom:0"></div>
 <svg style="left:332px;top:557px" width="24" height="17" viewBox="0 0 24 17"><rect x="1" y="1" width="22" height="16" fill="#000"/><circle cx="9" cy="12" r="3.5" fill="#e01020"/><path d="M9 12h8M17 4v13" stroke="#e01020" stroke-width="2"/></svg>
 <div class="a" style="left:364px;top:555px;width:30px;height:19px;border:2px solid #c8f0f0;border-bottom:0"></div>
 <div class="a" style="left:366px;top:557px;width:24px;height:17px;border:1px solid #000;border-bottom:0;font:11px/26px 'Liberation Sans',sans-serif;text-align:center;overflow:hidden">REF</div>
 <svg style="left:366px;top:555px" width="24" height="19" viewBox="0 0 24 19"><path d="M4 2L21 24M21 2L4 24" stroke="#e03030" stroke-width="2"/></svg>
 <div class="a" style="left:398px;top:555px;width:30px;height:19px;border:2px solid #c8f0f0;border-bottom:0"></div>
 <div class="a" style="left:401px;top:558px;width:22px;height:16px;background:#18e018;border:1px solid #000;border-bottom:0;font:bold 13px/18px 'Liberation Sans',sans-serif;text-align:center;color:#000;overflow:hidden">12</div>
 <div class="a" style="left:432px;top:555px;width:30px;height:19px;border:2px solid #c8f0f0;border-bottom:0"></div>
 <svg style="left:435px;top:558px" width="22" height="16" viewBox="0 0 22 16"><rect x=".5" y=".5" width="21" height="22" fill="#ff0" stroke="#000"/><path d="M4 5h14M4 8h14M4 11h10M4 14h12" stroke="#000"/></svg>
 <div class="a" style="left:466px;top:555px;width:26px;height:19px;border:3px solid #d01020;border-bottom:0;background:#000"></div>
 <svg style="left:470px;top:559px" width="18" height="15" viewBox="0 0 18 15"><rect x="2" y="12" width="3" height="10" fill="#18e018"/><rect x="6" y="8" width="3" height="14" fill="#e01020"/><rect x="10" y="2" width="3" height="20" fill="#c040e0"/><rect x="14" y="6" width="3" height="16" fill="#1878ff"/></svg>
</div>

<!-- histogram window -->
<div class="a" style="left:1082px;top:363px;width:478px;height:575px;background:linear-gradient(90deg,#222 0,#333 1.2%,#aac 1.5%,#222 98%,#bcd 98.6%,#eef 99.2%,#667 100%);border-radius:6px;border:1px solid #777;border-bottom-color:#888;z-index:7;overflow:hidden">
 <div class="a" style="left:0;top:0;width:476px;height:29px;background:linear-gradient(90deg,#2a3030 0,#6a7676 6%,#727e7e 24%,#3a4444 30%,#141414 45%,#141414 88%,#5a6a6a 96%,#93b4c4 100%)"></div>
 <div class="a" style="left:0;top:564px;width:476px;height:9px;background:linear-gradient(#e6f4f4,#fff)"></div>
 <svg style="left:7px;top:8px" width="16" height="14" viewBox="0 0 16 14"><rect width="16" height="14" fill="#f4f4e0" stroke="#888"/><rect width="16" height="3" fill="#224"/><path d="M4 5l8 7M12 5l-8 7" stroke="#c8a000" stroke-width="2"/></svg>
 <div class="a" style="left:27px;top:6px;font:13px/17px 'Liberation Sans',sans-serif;color:#2a3434">Results histogram</div>
 <div class="a" style="left:423px;top:0;width:47px;height:18px;border:1px solid #778;border-top:0;border-radius:0 0 4px 4px;color:#fff;font:bold 14px/15px 'Liberation Sans',sans-serif;text-align:center">✕</div>
</div>
<div class="a" style="left:1089px;top:392px;width:464px;height:540px;background:#54cdae;border:1px solid #1f5f55;z-index:7;overflow:hidden">
 <div class="a" style="left:4px;top:3px;width:103px;height:137px;background:#9ed9db;border:2px solid #0c2a25"></div>
 <div class="d" style="left:11px;top:14px"></div><div class="a m" style="left:28px;top:11px;font-size:14px;letter-spacing:.6px">Count</div>
 <div class="d" style="left:11px;top:41px"></div><div class="a m" style="left:28px;top:38px;font-size:14px;letter-spacing:.6px">Average</div>
 <div class="d" style="left:11px;top:68px"></div><div class="a m" style="left:28px;top:65px;font-size:14px;letter-spacing:.6px">Sum</div>
 <div class="d" style="left:11px;top:95px;background:#c8003c"></div><div class="a m" style="left:28px;top:92px;font-size:14px;letter-spacing:.6px">Min</div>
 <div class="d" style="left:11px;top:122px"></div><div class="a m" style="left:28px;top:119px;font-size:14px;letter-spacing:.6px">Max</div>
 <div class="a" style="left:4px;top:139px;width:103px;height:152px;background:#9ed9db;border:2px solid #0c2a25;border-top:0"></div>
 <div class="a m" style="left:9px;top:146px;width:72px;height:15px;background:#000;color:#6fe0c0;line-height:15px">Ring</div>
 <div class="a" style="left:84px;top:140px;width:2px;height:113px;background:#c8f0f0"></div>
 <div class="a" style="left:6px;top:252px;width:80px;height:2px;background:#c8f0f0"></div>
 <svg style="left:90px;top:142px" width="12" height="12"><path d="M6 1L11 11H1z" fill="#9ed9db" stroke="#c8f0f0"/></svg>
 <div class="s" style="left:90px;top:156px;width:12px;height:86px;background:#9ed9db"></div>
 <svg style="left:90px;top:243px" width="12" height="12"><path d="M6 11L11 1H1z" fill="#9ed9db" stroke="#4e8e8e"/></svg>
 <div class="b" style="left:7px;top:258px;width:29px;height:31px"></div><div class="a" style="left:10px;top:261px;width:22px;height:24px;border:1px solid #000;font:10px/13px 'Liberation Sans',sans-serif;text-align:center">DEL</div><div class="a" style="left:17px;top:275px;width:7px;height:7px;border-radius:50%;background:#e01020"></div>
 <div class="b" style="left:41px;top:258px;width:29px;height:31px"></div><div class="a" style="left:44px;top:261px;width:22px;height:24px;border:1px solid #000;font:10px/13px 'Liberation Sans',sans-serif;text-align:center">REF</div><div class="a" style="left:51px;top:275px;width:7px;height:7px;border-radius:50%;background:#10d020;border:1px solid #064"></div>

 <div class="a" style="left:108px;top:3px;width:349px;height:287px;background:#9ed9db;border:2px solid #0c2a25"></div>
 <div class="a" style="left:181px;top:8px;width:205px;height:21px;background:#b3ffff;border:1px solid #0c2a25;box-shadow:2px 2px 0 #6a9a9a;font:italic bold 15px/22px 'Liberation Mono',monospace;text-align:center">Size(Ring) / Min(Ring)</div>
 <div class="a r" style="left:170px;top:30px;width:55px;text-align:center;letter-spacing:.6px;line-height:20px">8.615</div>
 <div class="a r" style="left:115px;top:57px;width:55px;text-align:center;color:#d01020;letter-spacing:.6px;line-height:20px">6.759</div>
 <div class="a" style="left:170px;top:46px;width:55px;height:123px;background:#18e018;border:1px solid #0c2a25;border-bottom:0"></div>
 <div class="a" style="left:115px;top:73px;width:55px;height:96px;background:#ffff14;border:1px solid #0c2a25;border-bottom:0"></div>
 <div class="a" style="left:108px;top:168px;width:349px;height:4px;background:#000"></div>
 <div class="a r" style="left:115px;top:174px;width:55px;height:29px;background:#ffff14;border:1px solid #0c2a25;overflow:hidden;text-align:center;line-height:16px;padding-top:1px;letter-spacing:.4px">6.7-
  6.8</div>
 <div class="a r" style="left:170px;top:174px;width:55px;height:29px;background:#18e018;border:1px solid #0c2a25;overflow:hidden;text-align:center;line-height:16px;padding-top:1px;letter-spacing:.4px">8.6-
  8.7</div>
 <svg style="left:111px;top:211px" width="12" height="12"><path d="M1 6L11 1V11z" fill="#9ed9db" stroke="#4e8e8e"/></svg>
 <div class="s" style="left:124px;top:212px;width:316px;height:11px;background:#9ed9db"></div>
 <svg style="left:443px;top:211px" width="12" height="12"><path d="M11 6L1 1V11z" fill="#9ed9db" stroke="#4e8e8e"/></svg>
 <div class="a" style="left:109px;top:225px;width:348px;height:63px;background:#9ed9db;border:2px solid #0c2a25"></div>
 <div class="a m" style="left:115px;top:231px;width:64px;height:15px;background:#000;color:#6fe0c0;line-height:15px">Ring</div>
 <div class="a m" style="left:115px;top:248px">Hole</div>
 <div class="a m" style="left:115px;top:266px">Feature</div>
 <svg style="left:189px;top:231px" width="12" height="12"><path d="M6 1L11 11H1z" fill="#9ed9db" stroke="#c8f0f0"/></svg>
 <div class="s" style="left:189px;top:245px;width:12px;height:30px;background:#9ed9db"></div>
 <svg style="left:189px;top:276px" width="12" height="12"><path d="M6 11L11 1H1z" fill="#9ed9db" stroke="#4e8e8e"/></svg>
 <div class="a" style="left:202px;top:226px;width:253px;height:60px;background:#9ed9db;border-left:2px solid #c8f0f0"></div>
 <div class="a m" style="left:203px;top:229px;width:252px;text-align:center;letter-spacing:.6px;font-size:14px">Resolution</div>
 <div class="a r" style="left:209px;top:251px;letter-spacing:.6px">0.1</div>
 <div class="a" style="left:206px;top:270px;width:245px;height:13px;background:#84b4b6;border:2px solid;border-color:#4e8e8e #c8f0f0 #c8f0f0 #4e8e8e"></div>
 <div class="b" style="left:208px;top:272px;width:30px;height:9px;border-width:1px"></div>
 <div class="a" style="left:447px;top:293px;width:5px;height:6px;background:#9ed9db"></div>

 <div class="a" style="left:5px;top:301px;width:453px;height:164px;background:#54cdae;border:1px solid #0c2a25;border-top-width:2px"></div>
 <div class="a" style="left:123px;top:321px;width:213px;height:122px;background:#9ed9db;border:2px solid #000"></div>
 <svg style="left:123px;top:321px" width="213" height="122" viewBox="1213 714 213 122"><g fill="#f00ce8">
 <rect x="1222" y="726" width="6" height="20"/><rect x="1245" y="724" width="3" height="17"/><rect x="1266" y="728" width="3" height="14"/><rect x="1285" y="725" width="3" height="9"/><rect x="1338" y="722" width="3" height="20"/><rect x="1359" y="721" width="3" height="23"/><rect x="1247" y="761" width="23" height="3"/><rect x="1285" y="754" width="3" height="8"/><rect x="1309" y="756" width="6" height="6"/><rect x="1222" y="768" width="6" height="20"/><rect x="1245" y="783" width="3" height="11"/><rect x="1262" y="783" width="3" height="11"/><rect x="1285" y="784" width="3" height="9"/><rect x="1413" y="784" width="6" height="17"/><rect x="1222" y="800" width="6" height="21"/><rect x="1360" y="820" width="3" height="9"/><rect x="1373" y="820" width="23" height="6"/></g>
 <rect x="1220" y="778" width="10" height="8" fill="none" stroke="#222" stroke-dasharray="2 1"/></svg>

 <div class="b" style="left:5px;top:467px;width:30px;height:38px"></div><div class="a" style="left:8px;top:474px;width:22px;height:22px;border:1px solid #000;font:10px/11px 'Liberation Sans',sans-serif;text-align:center">DEL</div><div class="a" style="left:15px;top:484px;width:7px;height:7px;border-radius:50%;background:#e01020"></div>
 <div class="b" style="left:39px;top:467px;width:30px;height:38px"></div><div class="a" style="left:42px;top:474px;width:22px;height:22px;border:1px solid #000;font:10px/11px 'Liberation Sans',sans-serif;text-align:center">REF</div><div class="a" style="left:49px;top:484px;width:7px;height:7px;border-radius:50%;background:#10d020;border:1px solid #064"></div>
 <div class="a m" style="left:71px;top:465px;width:303px;height:42px;background:#9ed9db;border:1px solid #0c2a25;padding-left:3px;line-height:40px">220 measurements for 2 layers</div>
 <div class="b" style="left:380px;top:467px;width:38px;height:38px"></div>
 <svg style="left:383px;top:470px" width="32" height="32" viewBox="0 0 32 32"><rect x=".5" y=".5" width="30" height="29" fill="none" stroke="#0c2a25"/><rect x="3" y="3" width="13" height="13" fill="#9ed9db" stroke="#1010b0" stroke-width="2"/><path d="M4 15v-6l3 2 3-3 3 3v4z" fill="#e01020"/><rect x="19" y="19" width="8" height="8" fill="#9ed9db" stroke="#1010b0" stroke-width="2"/><path d="M18 6h6v10" fill="none" stroke="#000"/></svg>
 <div class="b" style="left:419px;top:467px;width:38px;height:38px"></div>
 <svg style="left:422px;top:470px" width="32" height="32" viewBox="0 0 32 32"><rect x=".5" y=".5" width="30" height="29" fill="none" stroke="#0c2a25"/><rect x="3" y="3" width="13" height="13" fill="#9ed9db" stroke="#1010b0" stroke-width="2"/><path d="M4 15v-6l3 2 3-3 3 3v4z" fill="#e01020"/><rect x="19" y="19" width="8" height="8" fill="#9ed9db" stroke="#1010b0" stroke-width="2"/><path d="M6 19v5h12" fill="none" stroke="#000"/></svg>
 <div class="a" style="left:0;top:510px;width:462px;height:2px;background:#1f5f55"></div>
 <div class="b m" style="left:2px;top:513px;width:458px;height:25px;line-height:21px">Close</div>
</div>
</div></body></html>
